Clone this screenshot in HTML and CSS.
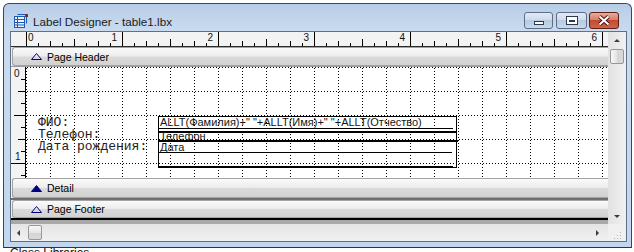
FILE: index.html
```html
<!DOCTYPE html>
<html lang="ru">
<head>
  <meta charset="UTF-8">
  <title>Label Designer - table1.lbx</title>
  <link rel="stylesheet" href="styles.css">
</head>
<body>
  <div class="window">
    <div class="titlebar">
      <svg class="app-icon" width="14" height="14" viewBox="0 0 14 14">
        <path d="M3.5 0.5h9v9" fill="none" stroke="#1d5bb5"/>
        <rect x="0.5" y="2.5" width="10" height="11" fill="#eaf2fc" stroke="#1d5bb5"/>
        <path d="M1 5.5h9M1 8.5h9M1 11h9M3.5 3v10" stroke="#1d5bb5"/>
        <rect x="11" y="0" width="3" height="3" fill="#8e2a1c"/>
      </svg>
      <span class="title">Label Designer - table1.lbx</span>
      <div class="caption">
        <div class="cap min">
          <svg width="27" height="15"><rect x="9.5" y="8.5" width="9" height="3" fill="#fff" stroke="#2b3a4f"/></svg>
        </div>
        <div class="cap max">
          <svg width="29" height="15">
            <rect x="9" y="3" width="12" height="9" fill="#2b3a4f"/>
            <rect x="10" y="4" width="10" height="7" fill="#fff"/>
            <rect x="12" y="7" width="6" height="2" fill="#2b3a4f"/>
          </svg>
        </div>
        <div class="cap close">
          <svg width="28" height="15">
            <path d="M9.5 3.5 L18.5 11.5 M18.5 3.5 L9.5 11.5" stroke="#4a150c" stroke-width="4"/>
            <path d="M9.5 3.5 L18.5 11.5 M18.5 3.5 L9.5 11.5" stroke="#fff" stroke-width="2"/>
          </svg>
        </div>
      </div>
    </div>

    <div class="client">
      <div class="designer">
        <svg class="ruler" id="hruler" width="597" height="14"></svg>

        <div class="band-bar">
          <svg class="tri" width="11" height="7"><polygon points="0.5,6.5 5.5,0.5 10.5,6.5" fill="none" stroke="#000080"/></svg>
          <span>Page Header</span>
        </div>

        <div class="band">
          <svg class="vruler" id="vruler" width="14" height="111"></svg>
          <div class="canvas">
            <svg class="grid" width="582" height="111">
              <defs>
                <pattern id="dots" x="1" y="1" width="24" height="24" patternUnits="userSpaceOnUse">
                  <path d="M0 23h1M3 23h1M6 23h1M9 23h1M12 23h1M15 23h1M18 23h1M21 23h1" stroke="#000" stroke-width="1" transform="translate(0,0.5)"/>
                  <path d="M23 0v1M23 3v1M23 6v1M23 9v1M23 12v1M23 15v1M23 18v1M23 21v1" stroke="#000" stroke-width="1" transform="translate(0.5,0)"/>
                </pattern>
              </defs>
              <rect width="582" height="111" fill="url(#dots)"/>
            </svg>

            <div class="labels">
              <div>ФИО:</div>
              <div>Телефон:</div>
              <div>Дата рождения:</div>
            </div>

            <div class="field-box">
              <div class="f-expr">ALLT(Фамилия)+" "+ALLT(Имя)+" "+ALLT(Отчество)</div>
              <div class="f-rule"></div>
              <div class="f-phone">Телефон</div>
              <div class="f-rule wide"></div>
              <div class="f-date">Дата</div>
              <div class="f-empty"></div>
            </div>
          </div>
        </div>

        <div class="band-bar detail">
          <svg class="tri" width="11" height="7"><polygon points="0.5,6.5 5.5,0.5 10.5,6.5" fill="#000080" stroke="#000080"/></svg>
          <span>Detail</span>
        </div>
        <div class="band-sep"></div>
        <div class="band-bar footer">
          <svg class="tri" width="11" height="7"><polygon points="0.5,6.5 5.5,0.5 10.5,6.5" fill="none" stroke="#000080"/></svg>
          <span>Page Footer</span>
        </div>
        <div class="page-end"></div>
      </div>

      <div class="vscroll">
        <div class="sb-btn"><span class="arrow up"></span></div>
        <div class="thumb v"></div>
        <div class="sb-track"></div>
        <div class="sb-btn"><span class="arrow down"></span></div>
      </div>

      <div class="hscroll">
        <div class="sb-btn h"><span class="arrow left"></span></div>
        <div class="thumb h"></div>
        <div class="sb-track"></div>
        <div class="sb-btn h"><span class="arrow right"></span></div>
      </div>

      <div class="grip">
        <svg width="17" height="17">
          <g fill="#b7b7b7">
            <rect x="12" y="8" width="1" height="1"/>
            <rect x="9" y="11" width="1" height="1"/><rect x="12" y="11" width="1" height="1"/>
            <rect x="6" y="14" width="1" height="1"/><rect x="9" y="14" width="1" height="1"/><rect x="12" y="14" width="1" height="1"/>
          </g>
        </svg>
      </div>
    </div>
  </div>
  <div class="behind">Class Libraries</div>

  <script>
    const svgNS = 'http://www.w3.org/2000/svg';

    function addRect(svg, x, y, w, h) {
      const r = document.createElementNS(svgNS, 'rect');
      r.setAttribute('x', x);
      r.setAttribute('y', y);
      r.setAttribute('width', w);
      r.setAttribute('height', h);
      r.setAttribute('fill', '#000');
      svg.appendChild(r);
    }

    function addLabel(svg, x, y, text, anchor) {
      const t = document.createElementNS(svgNS, 'text');
      t.setAttribute('x', x);
      t.setAttribute('y', y);
      t.setAttribute('text-anchor', anchor);
      t.textContent = text;
      svg.appendChild(t);
    }

    // horizontal ruler: 96px per inch, ticks every 1/8
    const hr = document.getElementById('hruler');
    for (let i = 0; 15 + i * 12 < 597; i++) {
      const x = 15 + i * 12;
      const n = i % 8;
      const top = n === 0 ? 0 : n === 4 ? 7 : n % 2 === 0 ? 9 : 11;
      addRect(hr, x, top, 1, 14 - top);
      if (n === 0) {
        const inch = i / 8;
        if (inch === 0) addLabel(hr, 17, 9, '0', 'start');
        else addLabel(hr, x - 5, 9, String(inch), 'end');
      }
    }

    // vertical ruler
    const vr = document.getElementById('vruler');
    for (let j = 1; j * 12 < 111; j++) {
      const n = j % 8;
      const len = n === 0 ? 14 : n === 4 ? 11 : n % 2 === 0 ? 7 : 4;
      addRect(vr, 14 - len, j * 12, len, 1);
    }
    addLabel(vr, 3, 10, '0', 'start');
    addLabel(vr, 4, 93, '1', 'start');
  </script>
</body>
</html>
```

FILE: styles.css
```css
body {
  margin: 0;
  background: #fff;
  font-family: "Liberation Sans", Arial, sans-serif;
  overflow: hidden;
}

.window {
  margin: 3px 0 0 3px;
  width: 629px;
  height: 245px;
  box-sizing: border-box;
  border: 1px solid #3c4654;
  border-bottom-color: #2e3540;
  border-radius: 6px 6px 0 0;
  background: linear-gradient(#b7cde7, #cadbef 28px, #c2d6ed);
  padding: 0 4px 5px 6px;
  display: flex;
  flex-direction: column;
}

/* title bar */
.titlebar {
  height: 27px;
  flex: none;
  display: flex;
  align-items: flex-start;
  padding-left: 4px;
}
.app-icon {
  margin-top: 10px;
}
.title {
  margin: 10px 0 0 5px;
  font-size: 11.7px;
  line-height: 15px;
  color: #1b1b1b;
}
.caption {
  margin: 8px 8px 0 auto;
  display: flex;
}
.cap {
  height: 17px;
  box-sizing: border-box;
  border: 1px solid #5b6e86;
  border-radius: 3px;
  background: linear-gradient(#e2eaf4, #cfdcec 45%, #b7cae0 50%, #c9d9ec);
}
.cap svg {
  display: block;
}
.cap.min { width: 29px; }
.cap.max { width: 31px; margin-left: 3px; }
.cap.close {
  width: 30px;
  margin-left: 2px;
  border-color: #5e1f13;
  background: linear-gradient(#e9ab9c, #d47f69 45%, #c24a32 50%, #cf6449);
}

/* client area */
.client {
  flex: 1;
  border: 1px solid #5f7189;
  background: #f0f0f0;
  display: grid;
  grid-template-columns: 597px 17px;
  grid-template-rows: 192px 17px;
}

.designer {
  display: flex;
  flex-direction: column;
  background: #f0f0f0;
}

.ruler {
  display: block;
  flex: none;
  background: #f3f3f3;
  border-bottom: 1px solid #2a2a2a;
  font-family: "Liberation Sans", Arial, sans-serif;
  font-size: 10px;
  fill: #111;
}

.band-bar {
  height: 19px;
  flex: none;
  box-sizing: border-box;
  margin-left: 1px;
  border: 1px solid #a3a3a3;
  border-right: none;
  border-radius: 3px 0 0 3px;
  background: linear-gradient(#fafafa, #ececec 48%, #dadada 52%, #d2d2d2);
  display: flex;
  align-items: center;
  padding-left: 18px;
  font-size: 10.5px;
  color: #000;
}
.band-bar .tri {
  display: block;
  margin-right: 5px;
}
.band-bar.detail { height: 20px; }
.band-bar.footer { height: 18px; }

.band-sep {
  height: 2px;
  background: #6f6f6f;
}
.page-end {
  height: 2px;
  background: #000;
  border-bottom: 4px solid #a8a8a8;
}

.band {
  height: 112px;
  flex: none;
  box-sizing: border-box;
  border-top: 1px solid #9c9c9c;
  display: flex;
}
.vruler {
  display: block;
  background: #f3f3f3;
  border-right: 1px solid #000;
  font-family: "Liberation Sans", Arial, sans-serif;
  font-size: 10px;
  fill: #111;
}
.canvas {
  flex: 1;
  position: relative;
  background: #fff;
  overflow: hidden;
}
.grid {
  position: absolute;
  left: 0;
  top: 0;
}

.labels {
  position: absolute;
  left: 12px;
  top: 50px;
  font-family: "Liberation Mono", "Courier New", monospace;
  font-size: 13px;
  line-height: 12px;
  color: #222;
  white-space: nowrap;
}

.field-box {
  position: absolute;
  left: 132px;
  top: 49px;
  width: 299px;
  box-sizing: border-box;
  border: 1px solid #000;
  font-size: 11px;
  color: #161616;
  white-space: nowrap;
}
.f-expr {
  height: 11px;
  line-height: 11px;
  padding-left: 1px;
  margin-right: 3px;
  border-bottom: 1px solid #000;
}
.f-rule {
  height: 2px;
  margin-top: 2px;
  background: #000;
}
.f-rule.wide {
  margin-top: 0;
  margin-right: -2px;
}
.f-phone {
  height: 7px;
  line-height: 7px;
  padding-left: 1px;
}
.f-date {
  height: 10px;
  line-height: 10px;
  padding-left: 1px;
  margin-right: 4px;
  border-bottom: 1px solid #000;
}
.f-empty {
  height: 13px;
  margin-right: 3px;
  border-bottom: 1px solid #000;
}

/* scrollbars */
.vscroll {
  grid-row: 1;
  grid-column: 2;
  display: flex;
  flex-direction: column;
  background: linear-gradient(to right, #e2e2e2, #f0f0f0);
}
.hscroll {
  grid-row: 2;
  grid-column: 1;
  display: flex;
  align-items: center;
  background: linear-gradient(#e4e4e4, #f1f1f1);
}
.sb-track {
  flex: 1;
}
.sb-btn {
  height: 16px;
  flex: none;
  display: flex;
  align-items: center;
  justify-content: center;
}
.sb-btn.h {
  width: 16px;
  height: 17px;
}
.arrow {
  width: 0;
  height: 0;
  border: 0 solid transparent;
}
.arrow.up { border-width: 0 3px 3px; border-bottom-color: #3c3c3c; }
.arrow.down { border-width: 3px 3px 0; border-top-color: #3c3c3c; }
.arrow.left { border-width: 3px 3px 3px 0; border-right-color: #3c3c3c; margin-left: -2px; }
.arrow.right { border-width: 3px 0 3px 3px; border-left-color: #3c3c3c; margin-left: -6px; }

.thumb {
  box-sizing: border-box;
  border: 1px solid #989898;
  border-radius: 2px;
}
.thumb.v {
  height: 15px;
  margin: 1px 1px 0 2px;
  background: linear-gradient(to right, #f7f7f7, #e4e4e4 50%, #d6d6d6 52%, #d9d9d9);
}
.thumb.h {
  width: 14px;
  height: 15px;
  margin-left: 1px;
  background: linear-gradient(#f7f7f7, #e6e6e6 50%, #d6d6d6 52%, #d9d9d9);
}

.grip {
  grid-row: 2;
  grid-column: 2;
  background: #f0f0f0;
}
.grip svg {
  display: block;
}

.behind {
  margin-left: 10px;
  font-size: 12px;
  line-height: 11px;
  color: #111;
}
```
